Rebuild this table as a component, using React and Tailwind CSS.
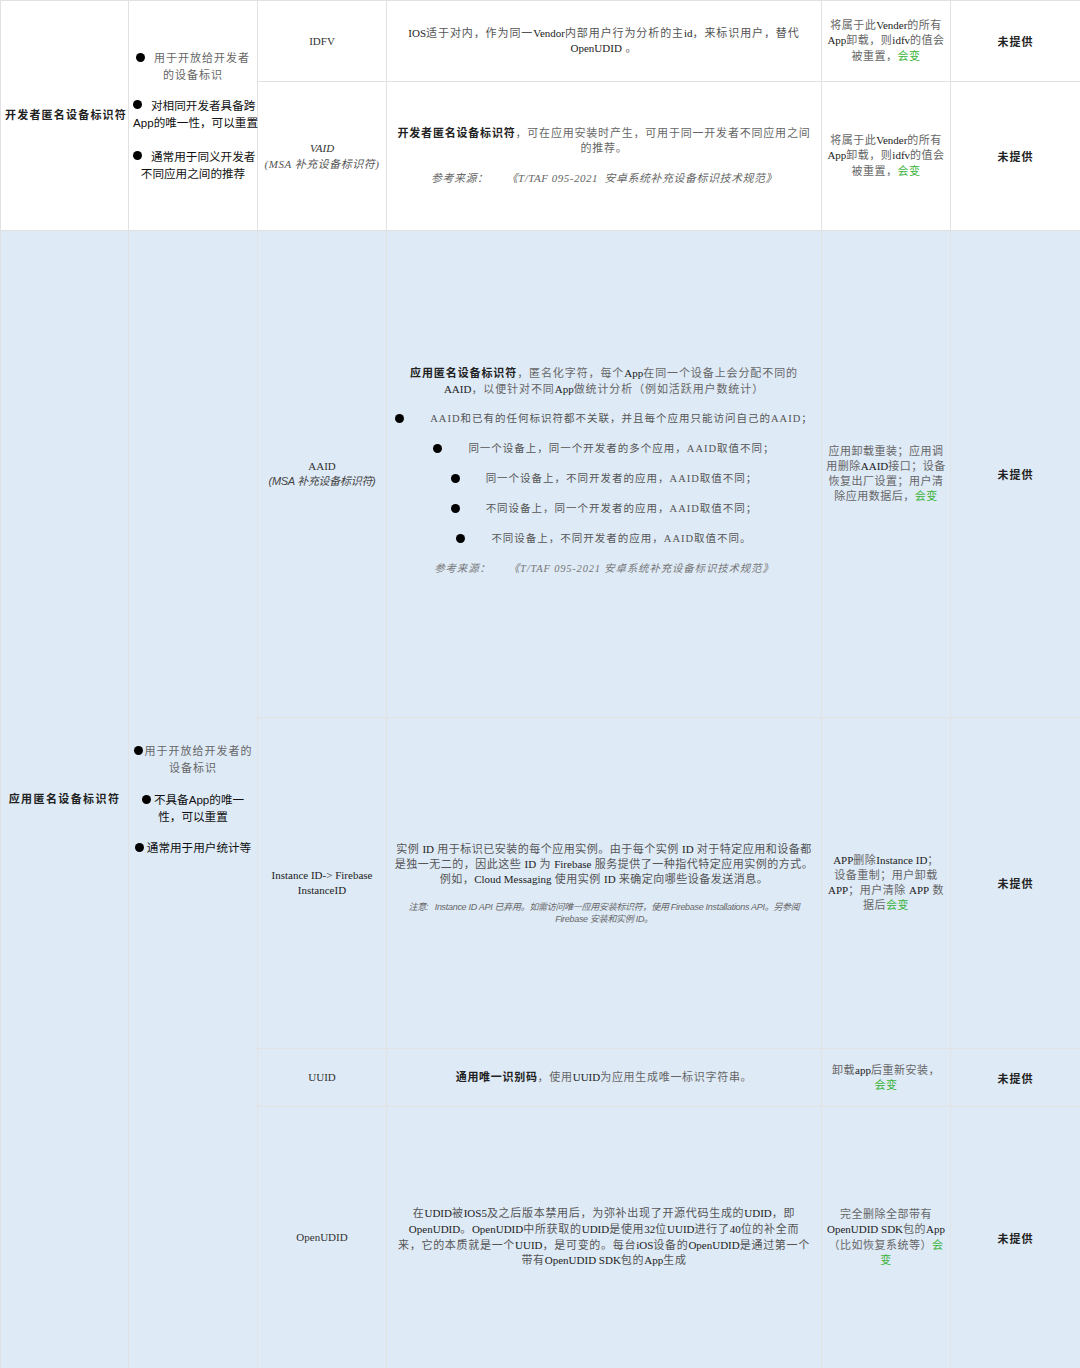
import React from 'react';

const serif = 'font-["Liberation_Serif","Noto_Sans_CJK_SC",serif]';
const sans = 'font-["Liberation_Sans","Noto_Sans_CJK_SC",sans-serif]';

const cell = 'border border-[#e2e2e2] text-center align-middle px-1';
const Green = ({ children }) => <span className="text-[#3bb33b]">{children}</span>;
const Dot = ({ className = '' }) => (
  <span className={`inline-block w-[9px] h-[9px] rounded-full bg-black align-middle ${className}`} />
);
const B = ({ children }) => <span className="text-[#222] tracking-normal">{children}</span>;

function NotGiven() {
  return <span className="font-bold text-[11px] text-[#222] tracking-[1px]">未提供</span>;
}

function AaidBullet({ children }) {
  return (
    <div className="flex items-center justify-center gap-[26px] h-[30px]">
      <Dot />
      <span className="text-[10.5px] text-[#555] tracking-[1px] whitespace-nowrap">{children}</span>
    </div>
  );
}

// bullet group used in column 2
function Feature({ dotGap, first, second, grey }) {
  return (
    <p
      className={`whitespace-nowrap leading-[17px] ${
        grey ? 'text-[11px] text-[#666] tracking-[1px]' : `${sans} text-[11.6px] text-[#111]`
      }`}
    >
      <Dot className={`-mt-[3px] ${dotGap}`} />
      {first}
      {second && (
        <>
          <br />
          {second}
        </>
      )}
    </p>
  );
}

export default function App() {
  return (
    <div className={`w-[1080px] h-[1368px] bg-white overflow-hidden ${serif} text-[#444]`}>
      <table className="w-[1080px] table-fixed border-collapse">
        <colgroup>
          <col className="w-[128px]" />
          <col className="w-[129px]" />
          <col className="w-[129px]" />
          <col className="w-[435px]" />
          <col className="w-[129px]" />
          <col className="w-[130px]" />
        </colgroup>
        <tbody>
          {/* developer anonymous id */}
          <tr className="h-[81px]">
            <td rowSpan={2} className={`${cell} font-bold text-[11px] text-[#222] tracking-[1.2px] px-0 whitespace-nowrap`}>
              开发者匿名设备标识符
            </td>
            <td rowSpan={2} className={`${cell} px-0`}>
              <div className="flex flex-col">
                <Feature grey dotGap="mr-[9px]" first="用于开放给开发者" second="的设备标识" />
                <div className="h-[13px]" />
                <Feature dotGap="mr-[9px]" first="对相同开发者具备跨" second="App的唯一性，可以重置" />
                <div className="h-[17px]" />
                <Feature dotGap="mr-[9px]" first="通常用于同义开发者" second="不同应用之间的推荐" />
              </div>
            </td>
            <td className={`${cell} text-[11px] text-[#333]`}>IDFV</td>
            <td className={`${cell} text-[11px] leading-[15px] px-2 tracking-[0.9px] text-[#555]`}>
              <B>IOS</B>适于对内，作为同一<B>Vendor</B>内部用户行为分析的主<B>id</B>，来标识用户，替代
              <br />
              <B>OpenUDID</B> 。
            </td>
            <td className={`${cell} text-[11px] leading-[15.5px] text-[#666] tracking-[0.5px]`}>
              将属于此<B>Vender</B>的所有<B>App</B>卸载，则<B>idfv</B>的值会被重置，<Green>会变</Green>
            </td>
            <td className={cell}><NotGiven /></td>
          </tr>
          <tr className="h-[149px]">
            <td className={`${cell} text-[11px] leading-[16px] italic text-[#333] px-0`}>
              VAID
              <br />
              <span className="text-[#555] tracking-[0.5px]">(MSA 补充设备标识符)</span>
            </td>
            <td className={`${cell} text-[11px] leading-[15px] px-0`}>
              <p className="text-[#666] tracking-[0.8px] whitespace-nowrap">
                <span className="font-bold text-[#222]">开发者匿名设备标识符</span>，可在应用安装时产生，可用于同一开发者不同应用之间
                <br />
                的推荐。
              </p>
              <p className="mt-[15px] italic text-[#666] tracking-[0.5px]">
                参考来源：<span className="ml-[18px]">《T/TAF 095-2021&nbsp; 安卓系统补充设备标识技术规范》</span>
              </p>
            </td>
            <td className={`${cell} text-[11px] leading-[15.5px] text-[#666] tracking-[0.5px]`}>
              将属于此<B>Vender</B>的所有<B>App</B>卸载，则<B>idfv</B>的值会被重置，<Green>会变</Green>
            </td>
            <td className={cell}><NotGiven /></td>
          </tr>

          {/* app anonymous id */}
          <tr className="h-[487px] bg-[#deeaf6]">
            <td rowSpan={4} className={`${cell} font-bold text-[11px] text-[#222] tracking-[1.4px] px-0 whitespace-nowrap`}>
              应用匿名设备标识符
            </td>
            <td rowSpan={4} className={`${cell} px-0`}>
              <div className="flex flex-col gap-[14px]">
                <Feature grey dotGap="mr-[2px]" first="用于开放给开发者的" second="设备标识" />
                <Feature dotGap="mr-[3px]" first="不具备App的唯一" second="性，可以重置" />
                <Feature dotGap="mr-[3px]" first="通常用于用户统计等" />
              </div>
            </td>
            <td className={`${cell} text-[11px] leading-[15px] text-[#333] px-0`}>
              AAID
              <br />
              <span className={`${sans} italic text-[#444] text-[11px] tracking-[-0.3px]`}>(MSA 补充设备标识符)</span>
            </td>
            <td className={`${cell} text-[11px] px-0`}>
              <p className="leading-[16px] text-[#666] tracking-[0.9px] whitespace-nowrap">
                <span className="font-bold text-[#222]">应用匿名设备标识符</span>，匿名化字符，每个<B>App</B>在同一个设备上会分配不同的
                <br />
                <B>AAID</B>，以便针对不同<B>App</B>做统计分析（例如活跃用户数统计）
              </p>
              <div className="mt-[7px]">
                <AaidBullet>AAID和已有的任何标识符都不关联，并且每个应用只能访问自己的AAID；</AaidBullet>
                <AaidBullet>同一个设备上，同一个开发者的多个应用，AAID取值不同；</AaidBullet>
                <AaidBullet>同一个设备上，不同开发者的应用，AAID取值不同；</AaidBullet>
                <AaidBullet>不同设备上，同一个开发者的应用，AAID取值不同；</AaidBullet>
                <AaidBullet>不同设备上，不同开发者的应用，AAID取值不同。</AaidBullet>
                <p className="h-[30px] leading-[30px] italic text-[10.5px] text-[#777] tracking-[0.8px]">
                  参考来源：<span className="ml-[18px]">《T/TAF 095-2021 安卓系统补充设备标识技术规范》</span>
                </p>
              </div>
            </td>
            <td className={`${cell} text-[11px] leading-[15px] text-[#666] tracking-[0.5px]`}>
              应用卸载重装；应用调用删除<B>AAID</B>接口；设备恢复出厂设置；用户清除应用数据后，<Green>会变</Green>
            </td>
            <td className={cell}><NotGiven /></td>
          </tr>
          <tr className="h-[331px] bg-[#deeaf6]">
            <td className={`${cell} text-[11px] leading-[15px] text-[#222] px-0`}>
              Instance ID-&gt; Firebase
              <br />
              InstanceID
            </td>
            <td className={`${cell} px-0`}>
              <p className="text-[11px] leading-[15px] text-[#555] tracking-[0.5px] whitespace-nowrap">
                实例 <B>ID</B> 用于标识已安装的每个应用实例。由于每个实例 <B>ID</B> 对于特定应用和设备都
                <br />
                是独一无二的，因此这些 <B>ID</B> 为 <B>Firebase</B> 服务提供了一种指代特定应用实例的方式。
                <br />
                例如，<B>Cloud Messaging</B> 使用实例 <B>ID</B> 来确定向哪些设备发送消息。
              </p>
              <p className={`${sans} italic mt-[14px] text-[9px] leading-[12px] text-[#666] tracking-[-0.3px] whitespace-nowrap`}>
                注意:&nbsp;&nbsp; Instance ID API 已弃用。如需访问唯一应用安装标识符，使用 Firebase Installations API。另参阅
                <br />
                Firebase 安装和实例 ID。
              </p>
            </td>
            <td className={`${cell} text-[11px] leading-[15px] text-[#666] tracking-[0.5px] px-0 whitespace-nowrap`}>
              <B>APP</B>删除<B>Instance ID</B>；
              <br />
              设备重制；用户卸载
              <br />
              <B>APP</B>；用户清除 <B>APP</B> 数
              <br />
              据后<Green>会变</Green>
            </td>
            <td className={cell}><NotGiven /></td>
          </tr>
          <tr className="h-[58px] bg-[#deeaf6]">
            <td className={`${cell} text-[11px] text-[#333]`}>UUID</td>
            <td className={`${cell} text-[11px] text-[#666] tracking-[0.7px]`}>
              <span className="font-bold text-[#222]">通用唯一识别码</span>，使用<B>UUID</B>为应用生成唯一标识字符串。
            </td>
            <td className={`${cell} text-[11px] leading-[15px] text-[#666] tracking-[0.5px]`}>
              卸载<B>app</B>后重新安装，
              <br />
              <Green>会变</Green>
            </td>
            <td className={cell}><NotGiven /></td>
          </tr>
          <tr className="h-[262px] bg-[#deeaf6]">
            <td className={`${cell} text-[11px] text-[#333]`}>OpenUDID</td>
            <td className={`${cell} text-[11px] leading-[15.6px] text-[#555] tracking-[0.7px] px-0 whitespace-nowrap`}>
              在<B>UDID</B>被<B>IOS5</B>及之后版本禁用后，为弥补出现了开源代码生成的<B>UDID</B>，即
              <br />
              <B>OpenUDID</B>。<B>OpenUDID</B>中所获取的<B>UDID</B>是使用<B>32</B>位<B>UUID</B>进行了<B>40</B>位的补全而
              <br />
              来，它的本质就是一个<B>UUID</B>，是可变的。每台<B>iOS</B>设备的<B>OpenUDID</B>是通过第一个
              <br />
              带有<B>OpenUDID SDK</B>包的<B>App</B>生成
            </td>
            <td className={`${cell} text-[11px] leading-[15.5px] text-[#666] tracking-[0.5px] px-0`}>
              完全删除全部带有<B>OpenUDID SDK</B>包的<B>App</B>（比如恢复系统等）<Green>会变</Green>
            </td>
            <td className={cell}><NotGiven /></td>
          </tr>
        </tbody>
      </table>
    </div>
  );
}
